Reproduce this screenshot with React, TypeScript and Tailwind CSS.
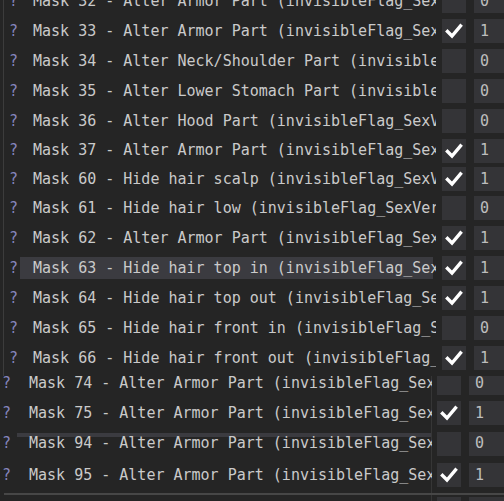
import React from "react";

type Row = { n: number; label: string; checked: boolean; h: number; active?: boolean; strip?: boolean };

const topRows: Row[] = [
  { n: 32, label: "Alter Armor Part (invisibleFlag_SexVer", checked: false, h: 30 },
  { n: 33, label: "Alter Armor Part (invisibleFlag_SexVer", checked: true, h: 30 },
  { n: 34, label: "Alter Neck/Shoulder Part (invisibleFlag", checked: false, h: 30 },
  { n: 35, label: "Alter Lower Stomach Part (invisibleFlag", checked: false, h: 30 },
  { n: 36, label: "Alter Hood Part (invisibleFlag_SexVer", checked: false, h: 30 },
  { n: 37, label: "Alter Armor Part (invisibleFlag_SexVer", checked: true, h: 29 },
  { n: 60, label: "Hide hair scalp (invisibleFlag_SexVer", checked: true, h: 28 },
  { n: 61, label: "Hide hair low (invisibleFlag_SexVer", checked: false, h: 30 },
  { n: 62, label: "Alter Armor Part (invisibleFlag_SexVer", checked: true, h: 30 },
  { n: 63, label: "Hide hair top in (invisibleFlag_SexVer", checked: true, h: 30, active: true },
  { n: 64, label: "Hide hair top out (invisibleFlag_SexVer", checked: true, h: 30 },
  { n: 65, label: "Hide hair front in (invisibleFlag_SexVer", checked: false, h: 30 },
  { n: 66, label: "Hide hair front out (invisibleFlag_SexVer", checked: true, h: 30 },
];

const bottomRows: Row[] = [
  { n: 74, label: "Alter Armor Part (invisibleFlag_SexVer", checked: false, h: 30 },
  { n: 75, label: "Alter Armor Part (invisibleFlag_SexVer", checked: true, h: 30 },
  { n: 94, label: "Alter Armor Part (invisibleFlag_SexVer", checked: false, h: 31, strip: true },
  { n: 95, label: "Alter Armor Part (invisibleFlag_SexVer", checked: true, h: 32 },
];

function Check() {
  return (
    <svg width="24" height="24" viewBox="0 0 24 24">
      <polyline points="5.5,12.5 10,17 18.5,7" fill="none" stroke="#ffffff" strokeWidth="3.4" strokeLinecap="square" strokeLinejoin="miter" />
    </svg>
  );
}

function Controls({ checked, gap }: { checked: boolean; gap: string }) {
  return (
    <div className={`flex items-center h-full ${gap}`}>
      <div className="w-[24px] h-[24px] shrink-0 bg-[#343437] flex items-center justify-center">
        {checked && <Check />}
      </div>
      <div className="ml-[8px] w-[40px] h-[24px] shrink-0 bg-[#343437] pl-[6px] flex items-center text-[#bdbdbd]">
        {checked ? "1" : "0"}
      </div>
    </div>
  );
}

function TopRow({ r }: { r: Row }) {
  return (
    <div className="flex items-center shrink-0" style={{ height: r.h }}>
      <div className="w-[16px] shrink-0 pl-[5px] text-[#8686bd]">?</div>
      <div className="relative w-[416px] h-[22px] shrink-0 overflow-hidden flex items-center">
        {r.active && <div className="absolute left-0 top-0 h-[22px] w-[413px] bg-[#3b3b40]" />}
        <span className="relative pl-[13px] whitespace-nowrap">{`Mask ${r.n} - ${r.label}`}</span>
      </div>
      <Controls checked={r.checked} gap="pl-[6px]" />
    </div>
  );
}

function BottomRow({ r }: { r: Row }) {
  return (
    <div className="flex items-center shrink-0" style={{ height: r.h }}>
      <div className="w-[16px] shrink-0 pl-[2px] text-[#8686bd]">?</div>
      <div className="relative w-[416px] h-[22px] shrink-0 overflow-hidden flex items-center">
        {r.strip && <div className="absolute left-[1px] top-[-1px] h-[5px] w-[414px] bg-[#3b3b40]" />}
        <span className="relative pl-[13px] whitespace-nowrap">{`Mask ${r.n} - ${r.label}`}</span>
      </div>
      <Controls checked={r.checked} gap="pl-[5px]" />
    </div>
  );
}

export default function App() {
  return (
    <div
      className="w-[504px] h-[501px] overflow-hidden bg-[#252525] text-[#cacaca] text-[15px] leading-none flex flex-col"
      style={{ fontFamily: '"DejaVu Sans Mono", "Liberation Mono", monospace' }}
    >
      <div className="h-[376px] shrink-0 overflow-hidden flex">
        <div className="w-[3px] shrink-0" />
        <div className="flex-1 border-l border-[#3c3c3c] flex flex-col mt-[-14px]">
          {topRows.map((r) => (
            <TopRow key={r.n} r={r} />
          ))}
        </div>
      </div>
      <div className="h-[125px] shrink-0 overflow-hidden flex">
        <div className="w-[432px] shrink-0 border-r border-[#363636] flex flex-col mt-[-8px]">
          {bottomRows.map((r) => (
            <div key={r.n} className="w-[504px]">
              <BottomRow r={r} />
            </div>
          ))}
          <div className="mt-[2px] ml-[4px] h-[2px] w-[500px] bg-[#474747] shrink-0" />
          <div className="w-[504px] flex mt-[2px] h-[24px]">
            <div className="w-[437px] shrink-0" />
            <div className="w-[24px] h-[24px] bg-[#343437] shrink-0" />
            <div className="ml-[8px] w-[40px] h-[24px] bg-[#343437] shrink-0" />
          </div>
        </div>
      </div>
    </div>
  );
}
